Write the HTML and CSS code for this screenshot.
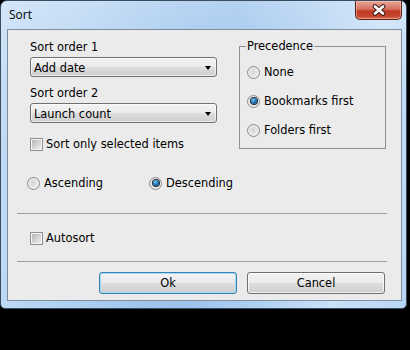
FILE: index.html
```html
<!DOCTYPE html>
<html lang="en">
<head>
    <meta charset="UTF-8">
    <title>Sort</title>
    <link rel="stylesheet" href="styles.css">
</head>
<body>
    <div class="window">
        <div class="titlebar">
            <span class="title">Sort</span>
            <div class="close-btn">
                <svg width="16" height="12" viewBox="0 0 16 12">
                    <path d="M4 2.5 L12 9.5 M12 2.5 L4 9.5" stroke="#3b1f1a" stroke-width="4.6" stroke-linecap="round"/>
                    <path d="M4 2.5 L12 9.5 M12 2.5 L4 9.5" stroke="#fff" stroke-width="2.6" stroke-linecap="round"/>
                </svg>
            </div>
        </div>

        <div class="client">
            <div class="top-row">
                <div class="orders">
                    <div class="field-label">Sort order 1</div>
                    <div class="combo"><span>Add date</span><span class="combo-arrow"></span></div>
                    <div class="field-label second">Sort order 2</div>
                    <div class="combo"><span>Launch count</span><span class="combo-arrow"></span></div>
                    <div class="check-row selected-only"><span class="checkbox"></span>Sort only selected items</div>
                </div>

                <fieldset class="group">
                    <legend>Precedence</legend>
                    <div class="radio-row"><span class="radio"></span>None</div>
                    <div class="radio-row"><span class="radio checked"></span>Bookmarks first</div>
                    <div class="radio-row"><span class="radio"></span>Folders first</div>
                </fieldset>
            </div>

            <div class="direction">
                <div class="radio-row asc"><span class="radio"></span>Ascending</div>
                <div class="radio-row"><span class="radio checked"></span>Descending</div>
            </div>

            <div class="separator"></div>

            <div class="check-row autosort"><span class="checkbox"></span>Autosort</div>

            <div class="separator second"></div>

            <div class="buttons">
                <button class="btn default">Ok</button>
                <button class="btn">Cancel</button>
            </div>
        </div>
    </div>
</body>
</html>
```

FILE: styles.css
```css
body {
    margin: 0;
    background: #000;
    font-family: 'DejaVu Sans', sans-serif;
    font-size: 11.4px;
    color: #000;
}

.window {
    width: 407px;
    height: 309px;
    box-sizing: border-box;
    border: 1px solid #3b4c5e;
    border-radius: 7px 7px 5px 5px;
    padding: 0 4px 7px 6px;
    background:
        linear-gradient(180deg, rgba(255,255,255,0.25) 0%, rgba(255,255,255,0) 30%),
        linear-gradient(100deg, #c6def6 0%, #b7d5f3 18%, #a2c7ee 40%, #9cc3ed 52%, #b0d0f1 68%, #c9e1f8 84%, #b8d6f4 100%);
}

.titlebar {
    height: 28px;
    display: flex;
    justify-content: space-between;
    align-items: flex-start;
}

.title {
    font-family: 'Open Sans', sans-serif;
    font-size: 12px;
    line-height: 16px;
    margin: 6px 0 0 2px;
}

.close-btn {
    width: 47px;
    height: 19px;
    box-sizing: border-box;
    border: 1px solid #5a2419;
    border-top: none;
    border-radius: 0 0 5px 5px;
    background: linear-gradient(180deg, #e8a69a 0%, #d6715f 45%, #c03a24 55%, #c4452c 85%, #d8755a 100%);
    box-shadow: inset 0 0 0 1px rgba(255,210,200,0.45);
    display: flex;
    align-items: center;
    justify-content: center;
}

.client {
    width: 395px;
    height: 272px;
    box-sizing: border-box;
    border: 1px solid #7d8d9e;
    background: #ebebeb;
}

.top-row {
    display: flex;
    align-items: flex-start;
    gap: 22px;
    padding-left: 22px;
}

.orders {
    width: 187px;
    padding-top: 11px;
}

.field-label {
    line-height: 13px;
    margin-bottom: 3px;
}

.field-label.second {
    margin-top: 10px;
}

.combo {
    height: 20px;
    box-sizing: border-box;
    border: 1px solid #707070;
    border-radius: 3px;
    padding: 1px 5px 0 3px;
    line-height: 18px;
    display: flex;
    align-items: center;
    justify-content: space-between;
    background: linear-gradient(180deg, #f3f3f3 0%, #ebebeb 48%, #dddddd 52%, #cfcfcf 100%);
    box-shadow: inset 0 0 0 1px rgba(255,255,255,0.6);
}

.combo-arrow {
    width: 0;
    height: 0;
    border-left: 3.5px solid transparent;
    border-right: 3.5px solid transparent;
    border-top: 4px solid #000;
}

.check-row {
    display: flex;
    align-items: center;
    gap: 3px;
    height: 13px;
    line-height: 13px;
}

.selected-only {
    margin-top: 15px;
}

.checkbox {
    flex: none;
    width: 13px;
    height: 13px;
    box-sizing: border-box;
    border: 1px solid #8e8f8f;
    background: linear-gradient(135deg, #aeaeae 0%, #d6d6d6 55%, #f4f4f4 100%);
    box-shadow: inset 0 0 0 1px #f4f4f4;
}

.group {
    width: 147px;
    box-sizing: border-box;
    margin: 10px 0 0 0;
    padding: 12px 0 11px 7px;
    border: 1px solid #8f9090;
}

.group legend {
    padding: 0 1px;
    margin-left: -1px;
    line-height: 13px;
}

.radio-row {
    display: flex;
    align-items: center;
    gap: 4px;
    height: 14px;
    line-height: 14px;
}

.group .radio-row + .radio-row {
    margin-top: 15px;
}

.radio {
    flex: none;
    width: 13px;
    height: 13px;
    box-sizing: border-box;
    border-radius: 50%;
    border: 1px solid #8a8a8a;
    background: radial-gradient(circle at 45% 45%, #d4d4d4 0%, #e6e6e6 45%, #fafafa 100%);
    display: flex;
    align-items: center;
    justify-content: center;
}

.radio.checked::after {
    content: '';
    width: 6px;
    height: 6px;
    border-radius: 50%;
    background: radial-gradient(circle at 40% 35%, #7fcdf3 0%, #1f74b8 45%, #0b3260 100%);
    box-shadow: 0 0 0 1px #1e2a34;
}

.direction {
    display: flex;
    margin-top: 25px;
    padding-left: 19px;
}

.direction .asc {
    width: 122px;
}

.separator {
    width: 370px;
    margin: 23px 0 0 9px;
    border-top: 1px solid #a0a0a0;
}

.separator.second {
    margin-top: 16px;
}

.autosort {
    margin-top: 18px;
    padding-left: 22px;
}

.buttons {
    display: flex;
    justify-content: flex-end;
    gap: 10px;
    margin-top: 10px;
    padding-right: 16px;
}

.btn {
    width: 138px;
    height: 22px;
    box-sizing: border-box;
    border: 1px solid #707070;
    border-radius: 3px;
    padding: 0;
    font-family: 'DejaVu Sans', sans-serif;
    font-size: 11.4px;
    color: #000;
    background: linear-gradient(180deg, #f2f2f2 0%, #ebebeb 48%, #dddddd 52%, #cfcfcf 100%);
    box-shadow: inset 0 0 0 1px rgba(255,255,255,0.7);
}

.btn.default {
    border-color: #3c7fb1;
    box-shadow: inset 0 0 0 1px #9fdcf7;
}
```
